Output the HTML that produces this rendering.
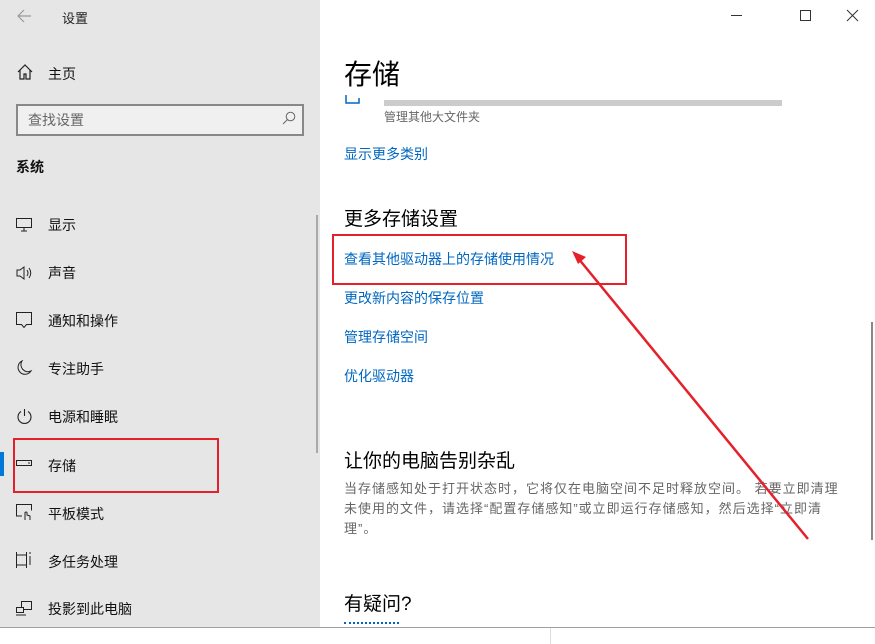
<!DOCTYPE html>
<html><head><meta charset="utf-8"><style>
*{margin:0;padding:0;box-sizing:border-box}
body{width:875px;height:644px;position:relative;overflow:hidden;background:#fff;font-family:"Liberation Sans","Noto Sans CJK SC","Microsoft YaHei",sans-serif;color:#000}
.l{position:absolute;left:0;top:0;width:320px;height:627px;background:#e6e6e6}
.a{position:absolute;white-space:nowrap}
.nav{position:absolute;left:48px;font-size:14px;color:#111}
.ic{position:absolute;left:16px}
.link{position:absolute;left:344px;font-size:14px;color:#0067c0}
</style></head><body>
<div class="l"></div>
<svg class="a" style="left:16px;top:9px" width="16" height="14"><path d="M15 7H2M8 1L2 7l6 6" stroke="#999" fill="none" stroke-width="1.2"/></svg>
<div class="a" style="left:62px;top:8px;font-size:13px;color:#222">设置</div>
<svg class="a" style="left:17px;top:64px" width="16" height="16"><path d="M1 8L8 1l7 7M3 6v9h4v-5h2v5h4V6" stroke="#222" fill="none" stroke-width="1.2"/></svg>
<div class="nav" style="top:64px">主页</div>
<div class="a" style="left:16px;top:104px;width:288px;height:32px;border:2px solid #888;background:#f0f0f0"></div>
<div class="a" style="left:28px;top:110px;font-size:14px;color:#666">查找设置</div>
<svg class="a" style="left:282px;top:111px" width="14" height="14"><circle cx="8.5" cy="5.5" r="4.3" stroke="#666" fill="none"/><path d="M5.5 8.5L1 13" stroke="#666"/></svg>
<div class="a" style="left:16px;top:157px;font-size:14px;font-weight:bold;color:#111">系统</div>
<div class="a" style="left:316px;top:215px;width:2px;height:238px;background:#aaa"></div>

<svg class="ic" style="top:217px" width="18" height="16"><rect x="0.5" y="1.5" width="15" height="9" stroke="#222" fill="none"/><path d="M8 11v3M5 14h6" stroke="#222"/></svg>
<div class="nav" style="top:215px">显示</div>
<svg class="ic" style="top:265px" width="18" height="16"><path d="M1 5h3l4-3v12l-4-3H1z" stroke="#222" fill="none"/><path d="M11 5q2 3 0 6M13 3q3.5 5 0 10" stroke="#222" fill="none"/></svg>
<div class="nav" style="top:263px">声音</div>
<svg class="ic" style="top:312px" width="18" height="18"><path d="M0.5 0.5h15v12h-5l-2.5 3-2.5-3h-5z" stroke="#222" fill="none"/></svg>
<div class="nav" style="top:311px">通知和操作</div>
<svg class="ic" style="top:360px" width="18" height="18"><path d="M6 1a7 7 0 1 0 9 10A7 7 0 0 1 6 1z" stroke="#222" fill="none"/></svg>
<div class="nav" style="top:359px">专注助手</div>
<svg class="ic" style="top:408px" width="18" height="18"><path d="M5 3.5a6.5 6.5 0 1 0 7 0M8.5 1v7" stroke="#222" fill="none" stroke-width="1.1"/></svg>
<div class="nav" style="top:407px">电源和睡眠</div>
<div class="a" style="left:0;top:452px;width:4px;height:24px;background:#0078d7"></div>
<svg class="ic" style="top:459px" width="18" height="10"><rect x="0.5" y="1.5" width="15" height="5" stroke="#222" fill="none"/><path d="M12 4h2" stroke="#222"/></svg>
<div class="nav" style="top:456px">存储</div>
<div class="a" style="left:13px;top:438px;width:206px;height:55px;border:2px solid #e5202b"></div>
<svg class="ic" style="top:504px" width="18" height="18"><path d="M6 12H0.5V0.5h15v6" stroke="#222" fill="none"/><path d="M9 16V8.5q1.2-1 2 0V11l3 1v4" stroke="#222" fill="none"/></svg>
<div class="nav" style="top:504px">平板模式</div>
<svg class="ic" style="top:552px" width="18" height="18"><path d="M0.5 0v16M10.5 0v16M0.5 3h10M0.5 13h10M14 4v9M14 0v2" stroke="#222" fill="none"/></svg>
<div class="nav" style="top:552px">多任务处理</div>
<svg class="ic" style="top:601px" width="18" height="16"><rect x="5.5" y="0.5" width="10" height="8" stroke="#222" fill="none"/><rect x="0.5" y="6.5" width="7" height="5" stroke="#222" fill="#e6e6e6"/><path d="M0 14h10" stroke="#222"/></svg>
<div class="nav" style="top:599px">投影到此电脑</div>

<div class="a" style="left:731px;top:15px;width:11px;height:1px;background:#333"></div>
<div class="a" style="left:800px;top:10px;width:11px;height:11px;border:1px solid #333"></div>
<svg class="a" style="left:846px;top:9px" width="13" height="13"><path d="M1 1l11 11M12 1L1 12" stroke="#333"/></svg>

<div class="a" style="left:344px;top:53px;font-size:28px;color:#000">存储</div>
<svg class="a" style="left:345px;top:95px" width="16" height="10"><path d="M1 0v8h13V3" stroke="#0067c0" fill="none" stroke-width="1.5"/></svg>
<div class="a" style="left:384px;top:100px;width:398px;height:6px;background:#cccccc"></div>
<div class="a" style="left:384px;top:108px;font-size:12px;color:#666">管理其他大文件夹</div>
<div class="link" style="top:144px">显示更多类别</div>
<div class="a" style="left:344px;top:204px;font-size:19px;color:#000">更多存储设置</div>
<div class="link" style="top:249px">查看其他驱动器上的存储使用情况</div>
<div class="a" style="left:332px;top:234px;width:295px;height:51px;border:2px solid #e5202b"></div>
<div class="link" style="top:288px">更改新内容的保存位置</div>
<div class="link" style="top:327px">管理存储空间</div>
<div class="link" style="top:366px">优化驱动器</div>
<div class="a" style="left:344px;top:446px;font-size:19px;color:#000">让你的电脑告别杂乱</div>
<div class="a" style="left:344px;top:479px;font-size:13px;line-height:20px;color:#666;letter-spacing:1px">当存储感知处于打开状态时，它将仅在电脑空间不足时释放空间。 若要立即清理<br>未使用的文件，请选择“配置存储感知”或立即运行存储感知，然后选择“立即清<br>理”。</div>
<div class="a" style="left:344px;top:589px;font-size:19px;color:#000">有疑问?</div>
<div class="a" style="left:344px;top:622px;width:55px;height:3px;border-top:2px dotted #0067c0"></div>
<div class="a" style="left:871px;top:322px;width:2px;height:218px;background:#888"></div>
<svg class="a" style="left:0;top:0" width="875" height="644"><path d="M808 539L578 258" stroke="#e5202b" stroke-width="2.5"/><path d="M572 251l14 6-8 7z" fill="#e5202b"/></svg>
<div class="a" style="left:0;top:627px;width:875px;height:17px;background:#fff;border-top:1px solid #a0a0a0"></div>
<div class="a" style="left:550px;top:628px;width:1px;height:16px;background:#ddd"></div>
</body></html>
